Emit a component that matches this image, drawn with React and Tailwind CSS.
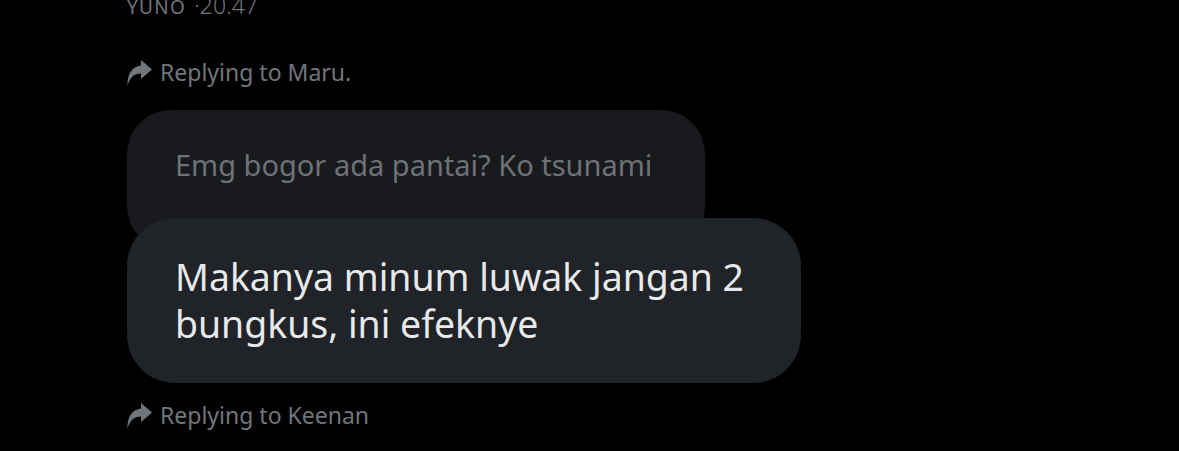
import React from 'react';

function ReplyIcon() {
  return (
    <svg viewBox="0 0 25 27" className="w-[25px] h-[27px] fill-[#71767b] shrink-0">
      <path d="M14 1 L25 10.5 L14 20 V14.5 C7.5 14.5 3 18 0.5 26.5 C0 15.5 5 7.5 14 6.5 Z" />
    </svg>
  );
}

function ReplyingTo({ name }) {
  return (
    <div className="flex items-center gap-[8px] text-[#71767b] text-[23px] leading-[28px]">
      <ReplyIcon />
      <span>Replying to {name}</span>
    </div>
  );
}

export default function App() {
  return (
    <div
      className="w-[1179px] h-[451px] bg-black overflow-hidden pl-[127px]"
      style={{ fontFamily: '"Noto Sans", "Open Sans", sans-serif' }}
    >
      <div className="-mt-[7px] flex items-baseline gap-[8px] text-[#71767b] leading-[24px]">
        <span className="text-[19px] tracking-[0.07em]">YUNO</span>
        <span className="text-[23px] font-light">·20.47</span>
      </div>

      <div className="mt-[39px]">
        <ReplyingTo name="Maru." />
      </div>

      <div className="mt-[24px] w-[578px] h-[140px] rounded-[44px] bg-[#191a1d] px-[48px] pt-[36px]">
        <p className="text-[#6e7276] text-[29px] leading-[38px]">Emg bogor ada pantai? Ko tsunami</p>
      </div>

      <div className="relative -mt-[32px] w-[674px] h-[165px] rounded-[48px] bg-[#202327] px-[48px] pt-[35px]">
        <p className="text-[#e7e9ea] text-[37.4px] leading-[47px]">
          Makanya minum luwak jangan 2<br />bungkus, ini efeknye
        </p>
      </div>

      <div className="mt-[18px]">
        <ReplyingTo name="Keenan" />
      </div>
    </div>
  );
}
